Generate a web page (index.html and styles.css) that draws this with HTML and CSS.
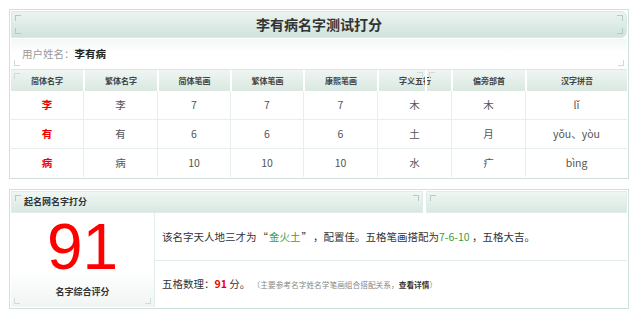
FILE: index.html
```html
<!DOCTYPE html>
<html lang="zh-CN">
<head>
<meta charset="utf-8">
<title>李有病名字测试打分</title>
<link rel="stylesheet" href="styles.css">
</head>
<body>
<div class="page">
  <section class="box box-main">
    <div class="bar">
      <i class="mk tl"></i><i class="mk bl"></i><i class="mk tr"></i><i class="mk br"></i>
      <h1>李有病名字测试打分</h1>
    </div>
    <div class="name-row">
      <i class="mk bl soft"></i><i class="mk br soft"></i>
      <span class="label">用户姓名：</span><b>李有病</b>
    </div>
    <div class="chars">
      <div class="th"><i class="mk tl soft"></i>简体名字</div>
      <div class="th">繁体名字</div>
      <div class="th">简体笔画</div>
      <div class="th">繁体笔画</div>
      <div class="th">康熙笔画</div>
      <div class="th">字义五行<i class="split"></i><i class="mk sl soft"></i><i class="mk sr soft"></i></div>
      <div class="th">偏旁部首</div>
      <div class="th">汉字拼音</div>

      <div class="td red">李</div><div class="td">李</div><div class="td">7</div><div class="td">7</div><div class="td">7</div><div class="td">木</div><div class="td">木</div><div class="td">lǐ</div>
      <div class="td red">有</div><div class="td">有</div><div class="td">6</div><div class="td">6</div><div class="td">6</div><div class="td">土</div><div class="td">月</div><div class="td">yǒu、yòu</div>
      <div class="td red last">病</div><div class="td last">病</div><div class="td last">10</div><div class="td last">10</div><div class="td last">10</div><div class="td last">水</div><div class="td last">疒</div><div class="td last">bìng</div>
    </div>
  </section>

  <section class="box box-score">
    <div class="bar2">
      <div class="bar2-left"><i class="mk tl"></i><i class="mk tr"></i>起名网名字打分</div>
      <div class="bar2-right"><i class="mk tl"></i></div>
    </div>
    <div class="score-body">
      <div class="score-panel">
        <i class="mk bl soft"></i><i class="mk br soft"></i>
        <div class="score-num">91</div>
        <div class="score-label">名字综合评分</div>
      </div>
      <div class="score-text">
        <p class="line"><span>该名字天人地三才为<span class="fw">“</span><em class="green">金火土</em><span class="fw">”</span>，配置佳。五格笔画搭配为<em class="green">7-6-10</em> ，五格大吉。</span></p>
        <p class="line"><span>五格数理：<b class="red">91</b> 分。 <small>（主要参考名字姓名学笔画组合搭配关系，<b>查看详情</b>）</small></span></p>
      </div>
    </div>
  </section>
</div>
</body>
</html>
```

FILE: styles.css
```css
html, body {
  margin: 0;
  padding: 0;
  background: #fff;
}
body {
  font-family: "Noto Sans CJK SC", "Noto Sans", sans-serif;
  color: #333;
  font-size: 10.5px;
  text-spacing-trim: space-all;
}
.page {
  padding: 9px;
  width: 620px;
}
.box {
  border: 1px solid #cfe1d9;
  padding: 1px;
  background: #fff;
  box-sizing: border-box;
  width: 620px;
}
.box-score {
  margin-top: 10px;
}
.mk {
  position: absolute;
  width: 5px;
  height: 5px;
  border: 0 solid #b3cbc0;
}
.mk.soft { border-color: #cddcd5; }
.mk.tl { top: 3px; left: 3px; border-top-width: 1px; border-left-width: 1px; }
.mk.bl { bottom: 3px; left: 3px; border-bottom-width: 1px; border-left-width: 1px; }
.mk.tr { top: 3px; right: 3px; border-top-width: 1px; border-right-width: 1px; }
.mk.br { bottom: 3px; right: 3px; border-bottom-width: 1px; border-right-width: 1px; }
.mk.sl { top: 2px; left: 38px; border-top-width: 1px; border-right-width: 1px; }
.mk.sr { top: 2px; left: 50px; border-top-width: 1px; border-left-width: 1px; }
.split {
  position: absolute;
  top: 0;
  bottom: 0;
  left: 46px;
  width: 2px;
  background: #fff;
}
.bar {
  position: relative;
  height: 25px;
  background: linear-gradient(#ebf4f0, #d0e3dc);
  border: 1px solid #dbe9e3;
  border-radius: 0 6px 6px 0;
}
.bar h1 {
  margin: 0;
  font-size: 14px;
  line-height: 25px;
  font-weight: bold;
  text-align: center;
  color: #333;
}
.name-row {
  position: relative;
  height: 30px;
  line-height: 30px;
  padding-left: 11px;
  margin-top: 1px;
  font-size: 10.5px;
  background: linear-gradient(#f2f7f5, #fff 45%);
  border-bottom: 1px solid #dbe8e2;
}
.name-row .label { color: #999; }
.name-row b { color: #222; }
.chars {
  display: grid;
  grid-template-columns: 72px 74px 73px 73px 74px 74px 74px 1fr;
}
.th {
  position: relative;
  height: 21px;
  line-height: 21px;
  text-align: center;
  font-size: 8px;
  font-weight: bold;
  color: #444;
  background: linear-gradient(#eff5f2, #dae8e1);
  border-left: 2px solid #fff;
}
.th:first-child { border-left: 0; }
.td {
  height: 28px;
  line-height: 28px;
  text-align: center;
  color: #555;
  border-left: 1px solid #e6efeb;
  border-bottom: 1px solid #e6efeb;
}
.td:nth-child(8n+1) { border-left: 0; }
.td.last { border-bottom: 0; }
.td.red {
  color: #e00;
  font-weight: bold;
}
.bar2 {
  display: flex;
  gap: 3px;
  height: 22px;
}
.bar2-left, .bar2-right {
  position: relative;
  background: linear-gradient(#f0f6f3, #d9e8e1);
  border: 1px solid #e0ece7;
  box-sizing: border-box;
}
.bar2-left {
  width: 412px;
  padding-left: 12px;
  font-size: 9px;
  font-weight: bold;
  line-height: 20px;
  color: #333;
}
.bar2-right { flex: 1; }
.score-body {
  display: flex;
  height: 94px;
}
.score-panel {
  position: relative;
  width: 143px;
  display: flex;
  flex-direction: column;
  align-items: center;
  background: linear-gradient(#fff 60%, #f0f5f3);
  border-right: 1px solid #e3ede8;
}
.score-num {
  font-family: "Liberation Sans", Arial, sans-serif;
  font-size: 64px;
  line-height: 64px;
  color: #f00;
  margin-top: 2px;
}
.score-label {
  font-size: 9px;
  line-height: 12px;
  font-weight: bold;
  color: #333;
  margin-top: 7px;
}
.score-text {
  flex: 1;
  display: flex;
  flex-direction: column;
}
.line {
  margin: 0;
  flex: 1;
  display: flex;
  align-items: center;
  padding-left: 7px;
  font-size: 10.5px;
  color: #333;
}
.line:first-child {
  border-bottom: 1px solid #e3ede8;
}
.fw {
  display: inline-block;
  width: 1em;
  text-align: center;
  margin: 0 1px;
}
.line em { font-style: normal; }
.green { color: #3aa03a; }
.line b.red { color: #e00; }
.line small {
  font-size: 7.7px;
  color: #888;
}
.line small b { color: #333; }
```
